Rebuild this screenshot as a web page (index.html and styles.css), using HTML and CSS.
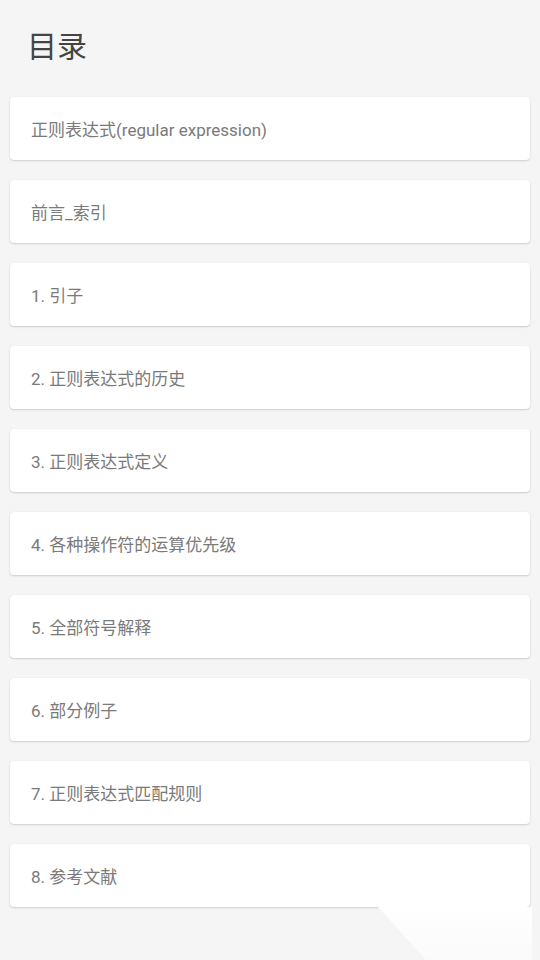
FILE: index.html
```html
<!DOCTYPE html>
<html lang="zh-CN">
<head>
<meta charset="utf-8">
<link rel="stylesheet" href="styles.css">
</head>
<body>
<div class="page">
  <h1 class="title">目录</h1>
  <ul class="toc">
    <li class="card">正则表达式(regular expression)</li>
    <li class="card">前言_索引</li>
    <li class="card">1. 引子</li>
    <li class="card">2. 正则表达式的历史</li>
    <li class="card">3. 正则表达式定义</li>
    <li class="card">4. 各种操作符的运算优先级</li>
    <li class="card">5. 全部符号解释</li>
    <li class="card">6. 部分例子</li>
    <li class="card">7. 正则表达式匹配规则</li>
    <li class="card">8. 参考文献</li>
  </ul>
  <div class="glow"></div>
</div>
</body>
</html>
```
FILE: styles.css
```css
html, body {
  margin: 0;
  padding: 0;
  background: #f5f5f5;
  width: 540px;
  height: 960px;
  overflow: hidden;
  font-family: Roboto, "Noto Sans CJK SC", sans-serif;
}
.page {
  position: relative;
  height: 960px;
}
.title {
  margin: 0;
  padding: 27px 0 0 27px;
  height: 97px;
  box-sizing: border-box;
  font-size: 30px;
  font-weight: 400;
  line-height: 40px;
  color: #444;
}
.toc {
  list-style: none;
  margin: 0;
  padding: 0 10px;
  display: flex;
  flex-direction: column;
  gap: 20px;
}
.card {
  height: 63px;
  box-sizing: border-box;
  background: #fff;
  border-radius: 4px;
  box-shadow: 0 1px 2px rgba(0,0,0,0.16), 0 0 1px rgba(0,0,0,0.08);
  display: flex;
  align-items: center;
  padding-left: 21px;
  font-size: 17px;
  color: #7a7a7a;
}
.glow {
  position: absolute;
  left: 378px;
  top: 907px;
  width: 154px;
  height: 53px;
  background: linear-gradient(to bottom, #fff, #fafafa);
  clip-path: polygon(0 0, 100% 0, 100% 100%, 48px 100%);
}
```
